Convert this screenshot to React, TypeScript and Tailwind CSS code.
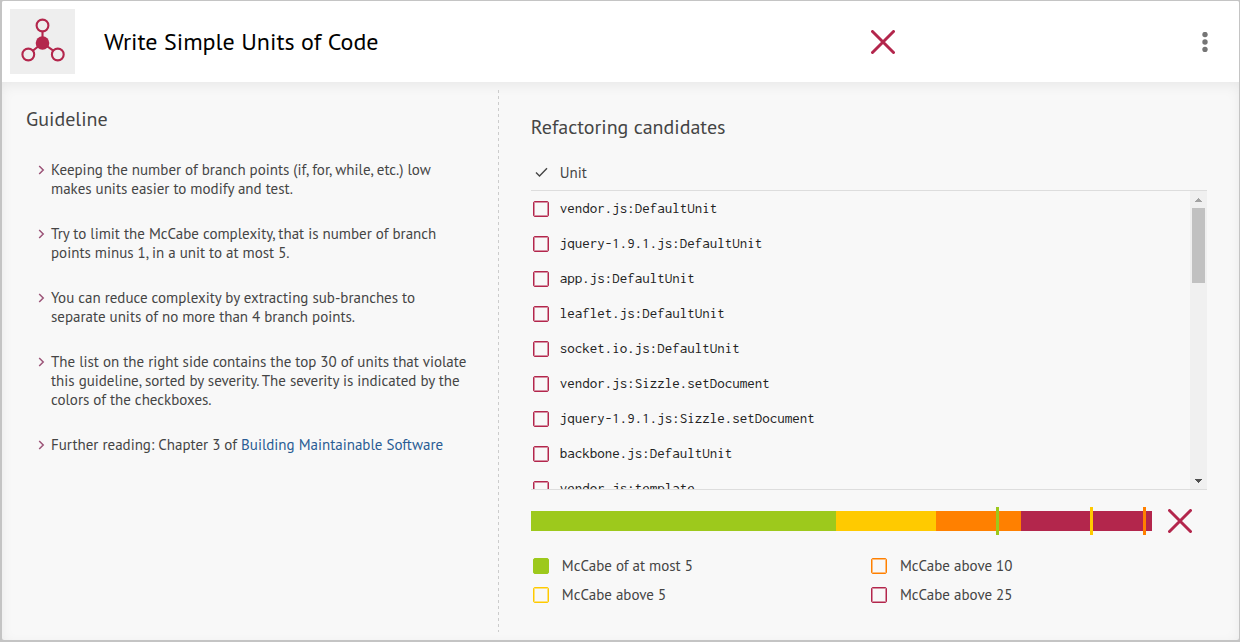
import { useRef, useState } from "react";

const guidelines = [
  "Keeping the number of branch points (if, for, while, etc.) low makes units easier to modify and test.",
  "Try to limit the McCabe complexity, that is number of branch points minus 1, in a unit to at most 5.",
  "You can reduce complexity by extracting sub-branches to separate units of no more than 4 branch points.",
  "The list on the right side contains the top 30 of units that violate this guideline, sorted by severity. The severity is indicated by the colors of the checkboxes.",
];

const units = [
  "vendor.js:DefaultUnit",
  "jquery-1.9.1.js:DefaultUnit",
  "app.js:DefaultUnit",
  "leaflet.js:DefaultUnit",
  "socket.io.js:DefaultUnit",
  "vendor.js:Sizzle.setDocument",
  "jquery-1.9.1.js:Sizzle.setDocument",
  "backbone.js:DefaultUnit",
  "vendor.js:template",
];

const segments = [
  { color: "bg-[#9dc91c]", share: 305 },
  { color: "bg-[#ffca00]", share: 100 },
  { color: "bg-[#ff8000]", share: 85 },
  { color: "bg-[#b3264c]", share: 131 },
];

const thresholds = [
  { color: "bg-[#9dc91c]", at: 74.9 },
  { color: "bg-[#ffca00]", at: 90 },
  { color: "bg-[#ff8000]", at: 98.5 },
];

const legend = [
  { label: "McCabe of at most 5", box: "border-[#9dc91c] bg-[#9dc91c]" },
  { label: "McCabe above 10", box: "border-[#ff8000] shadow-[inset_0_0_0_1px_#ff800080]" },
  { label: "McCabe above 5", box: "border-[#ffca00] shadow-[inset_0_0_0_1px_#ffca0080]" },
  { label: "McCabe above 25", box: "border-[#b3264c] shadow-[inset_0_0_0_1px_#b3264c80]" },
];

function UnitsIcon() {
  return (
    <svg viewBox="0 0 65 65" className="size-[65px] shrink-0 bg-[#eeeeee]" aria-hidden="true">
      <g fill="none" stroke="#b3264c" strokeWidth="2.1">
        <path d="M32.5 22v12M32.500 34L22.800 41.700M32.500 34L43.300 41.700" />
        <circle cx="32.500" cy="16.500" r="5.900" />
        <circle cx="18.300" cy="45.500" r="5.900" />
        <circle cx="47.800" cy="45.500" r="5.900" />
      </g>
      <circle cx="32.500" cy="34" r="6.800" fill="#b3264c" />
    </svg>
  );
}

function Cross() {
  return (
    <svg viewBox="0 0 24 24" className="size-6 shrink-0" role="img" aria-label="Not compliant">
      <path d="M1.500 1.500l21 21M22.500 1.500l-21 21" stroke="#b3264c" strokeWidth="3" strokeLinecap="round" />
    </svg>
  );
}

function Bullet() {
  return (
    <svg viewBox="0 0 7 10" className="mt-[5px] h-[10px] w-[7px] shrink-0" aria-hidden="true">
      <path d="M1.200 1l4 4-4 4" fill="none" stroke="#9c5478" strokeWidth="1.500" />
    </svg>
  );
}

function UnitList() {
  const list = useRef<HTMLUListElement>(null);
  const [progress, setProgress] = useState(0);

  const onScroll = () => {
    const el = list.current;
    if (el) setProgress(el.scrollTop / Math.max(1, el.scrollHeight - el.clientHeight));
  };
  const step = (amount: number) => list.current?.scrollBy({ top: amount });

  return (
    <div className="flex h-[300px] border-y border-[#dddddd]">
      <ul ref={list} onScroll={onScroll} className="min-w-0 flex-1 overflow-y-auto [scrollbar-width:none]">
        {units.map((unit) => (
          <li key={unit}>
            <label className="flex h-[35px] items-center gap-[11px] pl-[2px] font-['Inconsolata','Liberation_Mono',monospace] text-[15px] text-[#222222]">
              <input
                type="checkbox"
                className="size-4 shrink-0 appearance-none rounded-[2px] border border-[#b3264c] shadow-[inset_0_0_0_1px_#b3264c80] checked:bg-[#b3264c]"
              />
              {unit}
            </label>
          </li>
        ))}
      </ul>
      <div className="flex w-[17px] flex-col bg-[#f0f0f0]">
        <button type="button" aria-label="Scroll up" onClick={() => step(-35)} className="flex h-[17px] items-center justify-center">
          <svg viewBox="0 0 7 4" className="h-1 w-[7px]" shapeRendering="crispEdges">
            <path d="M3.500 0L7 4H0z" fill="#a3a3a3" />
          </svg>
        </button>
        <div className="flex flex-1 flex-col px-[2px]">
          <div style={{ flexGrow: progress }} />
          <div className="h-[75px] bg-[#c1c1c1]" />
          <div style={{ flexGrow: 1 - progress }} />
        </div>
        <button type="button" aria-label="Scroll down" onClick={() => step(35)} className="flex h-[17px] items-center justify-center">
          <svg viewBox="0 0 7 4" className="h-1 w-[7px]" shapeRendering="crispEdges">
            <path d="M0 0h7L3.500 4z" fill="#505050" />
          </svg>
        </button>
      </div>
    </div>
  );
}

export default function App() {
  return (
    <div className="flex min-h-screen bg-[#c4c4c4] pt-px pr-px pb-[2px] pl-[2px] font-['PT_Sans','Noto_Sans',sans-serif] text-[#454545]">
      <div className="flex min-w-0 flex-1 flex-col overflow-hidden rounded-[2px] bg-[#f8f8f8]">
        <header className="flex h-[81px] items-center bg-white pr-[22px] pl-2">
          <UnitsIcon />
          <h1 className="ml-[29px] flex-1 text-2xl text-black">Write Simple Units of Code</h1>
          <div className="flex w-[346px] items-center justify-between">
            <Cross />
            <button type="button" aria-label="More options" className="flex h-8 w-6 items-center justify-center">
              <svg viewBox="0 0 6 20" className="h-5 w-[6px]" fill="#757575">
                <circle cx="3" cy="2.500" r="2.700" />
                <circle cx="3" cy="10" r="2.700" />
                <circle cx="3" cy="17.500" r="2.700" />
              </svg>
            </button>
          </div>
        </header>

        <main className="flex flex-1 pb-2 shadow-[inset_0_4px_14px_-2px_rgba(0,0,0,0.08)]">
          <section className="mt-2 w-[calc(40%+1px)] pt-4 pr-7 pl-6">
            <h2 className="text-xl leading-[26px]">Guideline</h2>
            <ul className="mt-7 flex flex-col gap-[26px] pl-3 text-[15px] leading-[19px]">
              {guidelines.map((text) => (
                <li key={text} className="flex gap-[6px]">
                  <Bullet />
                  <span>{text}</span>
                </li>
              ))}
              <li className="flex gap-[6px]">
                <Bullet />
                <span>
                  Further reading: Chapter 3 of{" "}
                  <a href="#book" className="text-[#2a5c94]">Building Maintainable Software</a>
                </span>
              </li>
            </ul>
          </section>

          <div className="mt-2 w-px bg-[repeating-linear-gradient(to_bottom,#cccccc_0_3px,transparent_3px_6px)]" />

          <section className="mt-2 min-w-0 flex-1 pt-6 pr-8 pl-8">
            <h2 className="text-xl leading-[26px]">Refactoring candidates</h2>
            <div className="mt-[23px] flex h-[27px] items-start gap-3 pl-1 text-[15px] leading-[19px]">
              <svg viewBox="0 0 13 10" className="mt-1 h-[10px] w-[13px]" aria-hidden="true">
                <path d="M1 5.500l3.500 3.500L12 1.200" fill="none" stroke="#454545" strokeWidth="1.400" />
              </svg>
              <span>Unit</span>
            </div>
            <UnitList />
            <div className="mt-[17px] flex items-center gap-4 pr-[15px]">
              <div className="relative flex h-7 flex-1 items-center">
                {segments.map((s) => (
                  <div key={s.color} className={`h-5 ${s.color}`} style={{ flexGrow: s.share, flexBasis: 0 }} />
                ))}
                {thresholds.map((t) => (
                  <div key={t.color} className={`absolute inset-y-0 w-[3px] ${t.color}`} style={{ left: `${t.at}%` }} />
                ))}
              </div>
              <Cross />
            </div>
            <ul className="mt-[21px] grid grid-cols-2 gap-x-[2px] gap-y-[10px] pl-[2px] text-[15px] leading-[19px]">
              {legend.map((l) => (
                <li key={l.label} className="flex items-center gap-[13px]">
                  <span className={`size-4 rounded-[2px] border ${l.box}`} />
                  {l.label}
                </li>
              ))}
            </ul>
          </section>
        </main>
      </div>
    </div>
  );
}
